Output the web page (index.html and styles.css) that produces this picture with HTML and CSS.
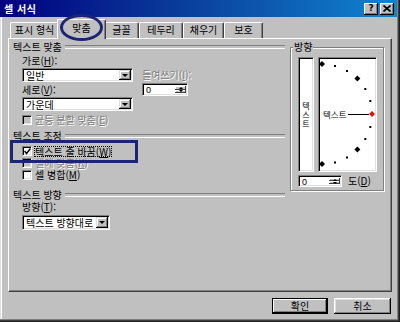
FILE: index.html
```html
<!DOCTYPE html>
<html lang="ko">
<head>
<meta charset="utf-8">
<title>셀 서식</title>
<link rel="stylesheet" href="styles.css">
</head>
<body>
<div class="win">
  <div class="title">
    <span class="ttext">셀 서식</span>
    <div class="tbtns">
      <span class="tb help">?</span>
      <span class="tb close"><svg width="8" height="7" viewBox="0 0 8 7"><path d="M0.5 0.5 L7.5 6.5 M7.5 0.5 L0.5 6.5" stroke="#000" stroke-width="1.6"/></svg></span>
    </div>
  </div>

  <div class="tabs">
    <div class="tab t1">표시 형식</div>
    <div class="tab t2 sel">맞춤</div>
    <div class="tab t3">글꼴</div>
    <div class="tab t4">테두리</div>
    <div class="tab t5">채우기</div>
    <div class="tab t6">보호</div>
  </div>

  <div class="panel">
    <div class="left">
      <div class="hdr"><span>텍스트 맞춤</span></div>
      <div class="grp1 ind">
        <div class="col1">
          <div class="lab">가로(<u>H</u>):</div>
          <div class="combo c1"><span class="val">일반</span><span class="dd"><i></i></span></div>
          <div class="lab l2">세로(<u>V</u>):</div>
          <div class="combo c1"><span class="val">가운데</span><span class="dd"><i></i></span></div>
        </div>
        <div class="col2">
          <div class="lab dis">들여쓰기(<u>I</u>):</div>
          <div class="spin s1"><span class="val">0</span><span class="sb"><b class="up"></b><b class="dn"></b></span></div>
        </div>
      </div>
      <div class="chk ind dis c-e"><span class="box"></span><span class="ctext">균등 분할 맞춤(<u>E</u>)</span></div>

      <div class="hdr h2"><span>텍스트 조정</span></div>
      <div class="chk ind c-w"><span class="box on"><svg width="7" height="7" viewBox="0 0 7 7"><path d="M0.5 3 L2.5 5.5 L6.5 0.5" fill="none" stroke="#000" stroke-width="1.5"/></svg></span><span class="ctext focus">텍스트 줄 바꿈(<u>W</u>)</span></div>
      <div class="chk ind dis"><span class="box"></span><span class="ctext">셀에 맞춤(<u>K</u>)</span></div>
      <div class="chk ind"><span class="box"></span><span class="ctext">셀 병합(<u>M</u>)</span></div>

      <div class="hdr h3"><span>텍스트 방향</span></div>
      <div class="ind">
        <div class="lab">방향(<u>T</u>):</div>
        <div class="combo c3"><span class="val">텍스트 방향대로</span><span class="dd"><i></i></span></div>
      </div>
    </div>

    <div class="orient">
      <span class="legend">방향</span>
      <div class="orow">
        <div class="vbox"><span>텍</span><span>스</span><span>트</span></div>
        <div class="dial">
          <svg width="57" height="113" viewBox="1 1 57 113">
            <g fill="#000">
              <path d="M4 4 L7 7 L4 10 L1 7 Z"/>
              <rect x="16" y="8" width="2" height="2"/>
              <rect x="28" y="13" width="2" height="2"/>
              <path d="M39.4 18.6 L42.4 21.6 L39.4 24.6 L36.4 21.6 Z"/>
              <rect x="46.3" y="31" width="2" height="2"/>
              <rect x="51.3" y="43" width="2" height="2"/>
              <rect x="51.3" y="69" width="2" height="2"/>
              <rect x="46.3" y="81" width="2" height="2"/>
              <path d="M39.4 89.4 L42.4 92.4 L39.4 95.4 L36.4 92.4 Z"/>
              <rect x="28" y="99.5" width="2" height="2"/>
              <rect x="16" y="104.5" width="2" height="2"/>
              <path d="M4 104 L7 107 L4 110 L1 107 Z"/>
            </g>
            <text x="5" y="60.5" font-size="8.5" font-family="Noto Sans CJK KR, sans-serif" fill="#000">텍스트</text>
            <line x1="30" y1="57.5" x2="51" y2="57.5" stroke="#000" stroke-width="1"/>
            <path d="M54 54 L57 57 L54 60 L51 57 Z" fill="#e01010"/>
          </svg>
        </div>
      </div>
      <div class="drow">
        <div class="spin s2"><span class="val">0</span><span class="sb"><b class="up"></b><b class="dn"></b></span></div>
        <span class="deg">도(<u>D</u>)</span>
      </div>
    </div>
  </div>

  <div class="btnrow">
    <div class="btn def">확인</div>
    <div class="btn">취소</div>
  </div>

  <div class="mark-ellipse"></div>
  <div class="mark-rect"></div>
</div>
</body>
</html>
```

FILE: styles.css
```css
* { box-sizing: border-box; }
body { margin: 0; background: #c0c0c0; }

.win {
  width: 400px;
  height: 322px;
  position: relative;
  background: #c0c0c0;
  font-family: "Noto Sans CJK KR", "Noto Sans", sans-serif;
  font-size: 10px;
  color: #000;
  display: flex;
  flex-direction: column;
  overflow: hidden;
  box-shadow: inset -1px -1px #202020, inset -2px -2px #404040, inset -3px -3px #808080, inset 1px 1px #dfdfdf, inset 2px 2px #fff;
}

u { text-decoration: underline; text-underline-offset: 1px; }

/* title bar */
.title {
  height: 17px;
  margin-right: 3px;
  background: linear-gradient(90deg, #000080 0%, #0a3c9a 45%, #1084d0 100%);
  color: #fff;
  display: flex;
  align-items: center;
  justify-content: space-between;
  padding: 0 3px 0 4px;
}
.ttext { font-weight: bold; font-size: 10px; line-height: 17px; letter-spacing: 0.5px; }
.tbtns { display: flex; gap: 2px; }
.tb {
  width: 14px;
  height: 12px;
  background: #c0c0c0;
  color: #000;
  display: flex;
  align-items: center;
  justify-content: center;
  font-family: "DejaVu Sans", sans-serif;
  font-weight: bold;
  font-size: 9px;
  line-height: 1;
  box-shadow: inset -1px -1px #000, inset 1px 1px #fff, inset -2px -2px #808080;
}

/* tabs */
.tabs {
  height: 21px;
  display: flex;
  align-items: flex-end;
  padding-left: 10px;
}
.tab {
  height: 16px;
  background: #c0c0c0;
  border-top: 1px solid #fff;
  border-left: 1px solid #fff;
  border-right: 1px solid #404040;
  border-radius: 2px 2px 0 0;
  box-shadow: inset -1px 0 #808080;
  display: flex;
  align-items: center;
  justify-content: center;
  line-height: 1;
  padding-bottom: 1px;
}
.t1 { width: 49px; }
.t2 { width: 45px; }
.t3 { width: 35px; }
.t4 { width: 44px; }
.t5 { width: 41px; }
.t6 { width: 39px; }
.tab.sel {
  height: 20px;
  width: 49px;
  margin: 0 -2px -1px;
  position: relative;
  z-index: 2;
  padding-bottom: 3px;
}

/* main panel */
.panel {
  margin-left: 8px;
  width: 384px;
  height: 254px;
  border-top: 1px solid #fff;
  border-left: 1px solid #fff;
  border-right: 1px solid #404040;
  border-bottom: 1px solid #404040;
  box-shadow: inset -1px -1px #808080;
  display: flex;
  align-items: flex-start;
  padding: 2px 0 0 4px;
}
.left { width: 272px; }

.hdr {
  height: 12px;
  display: flex;
  align-items: center;
  gap: 3px;
  line-height: 12px;
}
.hdr::after {
  content: "";
  flex: 1;
  height: 2px;
  border-top: 1px solid #808080;
  border-bottom: 1px solid #fff;
}
.h2 { margin-top: 4px; }
.h3 { margin-top: 8px; }

.ind { padding-left: 9px; }
.lab { height: 12px; line-height: 12px; white-space: nowrap; }
.dis { color: #808080; text-shadow: 1px 1px 0 #fff; }

.grp1 { display: flex; margin-top: 2px; }
.col1 { width: 111px; }
.col1 .combo { margin-top: 1px; }
.col1 .l2 { margin-top: 2px; }
.col2 { margin-left: 9px; padding-top: 14px; }

/* sunken field */
.combo, .spin, .box, .vbox, .dial {
  background: #fff;
  border: 1px solid;
  border-color: #808080 #fff #fff #808080;
  box-shadow: inset 1px 1px #000, inset -1px -1px #dfdfdf;
}
.combo {
  display: flex;
  align-items: stretch;
  height: 14px;
  padding: 1px 1px 1px 1px;
}
.c1 { width: 111px; }
.c3 { width: 88px; height: 15px; margin-top: 2px; }
.combo .val {
  flex: 1;
  line-height: 12px;
  padding-left: 2px;
  white-space: nowrap;
  overflow: visible;
}
.dd {
  width: 12px;
  flex: none;
  background: #c0c0c0;
  box-shadow: inset -1px -1px #000, inset 1px 1px #dfdfdf, inset -2px -2px #808080, inset 2px 2px #fff;
  display: flex;
  align-items: center;
  justify-content: center;
}
.dd i {
  width: 0;
  height: 0;
  border-left: 3px solid transparent;
  border-right: 3px solid transparent;
  border-top: 3px solid #000;
}

.spin {
  display: flex;
  height: 13px;
  padding: 1px;
}
.s1 { width: 46px; margin-top: 2px; }
.spin .val { flex: 1; line-height: 11px; padding-left: 2px; font-family: "Liberation Sans", sans-serif; font-size: 9px; }
.sb { width: 11px; display: flex; flex-direction: column; padding: 1px 0; }
.sb b {
  flex: 1;
  background: #c0c0c0;
  box-shadow: inset -1px -1px #404040, inset 1px 1px #fff;
  display: flex;
  align-items: center;
  justify-content: center;
}
.sb b::after {
  content: "";
  width: 0;
  height: 0;
  border-left: 2px solid transparent;
  border-right: 2px solid transparent;
}
.sb .up::after { border-bottom: 2px solid #000; }
.sb .dn::after { border-top: 2px solid #000; }

/* checkboxes */
.chk {
  height: 12px;
  display: flex;
  align-items: center;
  gap: 2px;
  line-height: 12px;
  white-space: nowrap;
}
.c-e { margin-top: 3px; }
.c-w { margin-top: 3px; }
.box {
  width: 10px;
  height: 10px;
  display: flex;
  align-items: center;
  justify-content: center;
  flex: none;
}
.chk.dis .box { background: #c0c0c0; }
.ctext { padding: 0 1px; }
.focus { outline: 1px dotted #000; outline-offset: -1px; line-height: 11px; }

/* orientation group */
.orient {
  position: relative;
  margin: 6px 0 0 5px;
  width: 94px;
  height: 144px;
  border: 1px solid #808080;
  box-shadow: inset 1px 1px #fff, 1px 1px #fff;
  padding: 9px 0 0 7px;
}
.legend {
  position: absolute;
  left: 2px;
  top: -7px;
  background: #c0c0c0;
  padding: 0 1px;
  line-height: 12px;
}
.orow { display: flex; gap: 4px; }
.vbox {
  width: 16px;
  height: 115px;
  display: flex;
  flex-direction: column;
  align-items: center;
  justify-content: center;
  font-size: 8px;
  line-height: 9px;
}
.dial { width: 59px; height: 115px; }
.dial svg { display: block; }
.drow { display: flex; align-items: center; margin-top: 3px; gap: 6px; }
.s2 { width: 44px; height: 12px; }
.s2 .val { line-height: 10px; }
.deg { line-height: 12px; }

/* buttons */
.btnrow {
  display: flex;
  justify-content: flex-end;
  gap: 6px;
  padding-right: 9px;
  margin-top: 6px;
}
.btn {
  width: 57px;
  height: 16px;
  background: #c0c0c0;
  display: flex;
  align-items: center;
  justify-content: center;
  line-height: 1;
  box-shadow: inset -1px -1px #000, inset 1px 1px #fff, inset -2px -2px #808080, inset 2px 2px #dfdfdf;
}
.btn.def {
  width: 56px;
  border: 1px solid #000;
  box-shadow: inset -1px -1px #000, inset 1px 1px #fff, inset -2px -2px #808080;
}

/* annotation marks drawn over the dialog */
.mark-ellipse {
  position: absolute;
  left: 60px;
  top: 14px;
  width: 43px;
  height: 27px;
  border: 3px solid #1c2474;
  border-radius: 50%;
  z-index: 5;
}
.mark-rect {
  position: absolute;
  left: 10px;
  top: 140px;
  width: 128px;
  height: 23px;
  border: 3px solid #1c2474;
  z-index: 5;
}
```
